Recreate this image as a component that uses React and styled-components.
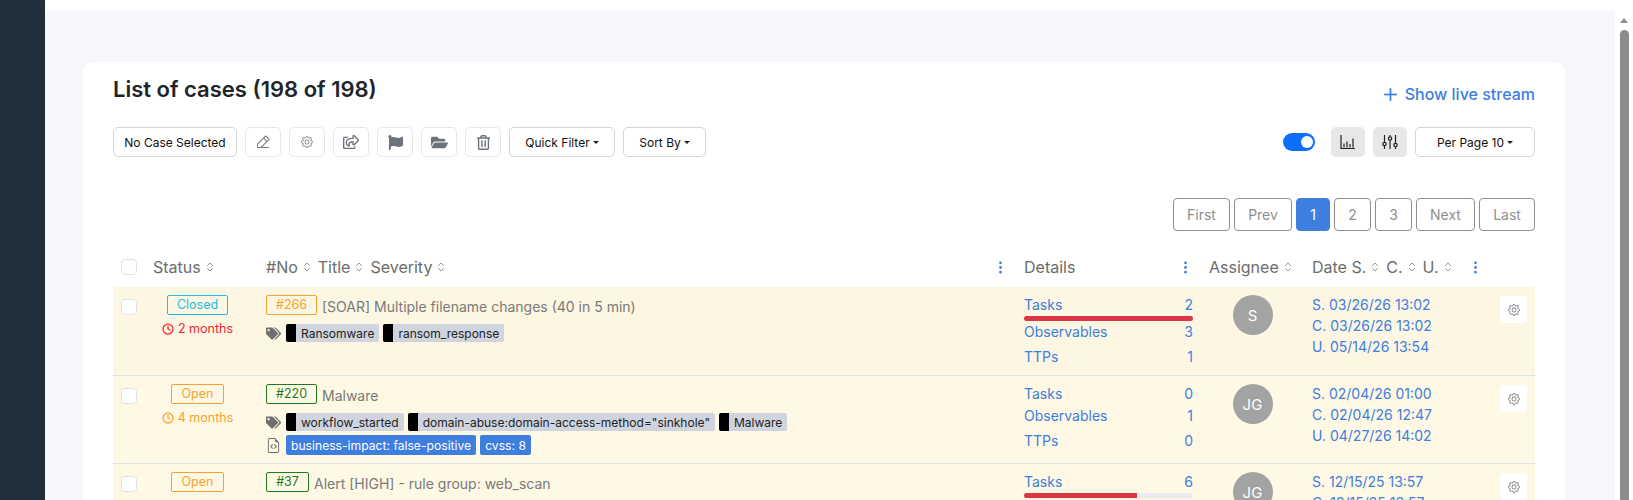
import React from "react";
import styled, {createGlobalStyle} from "styled-components";
import {FaFlag, FaFolderOpen, FaRegShareSquare, FaRegTrashAlt, FaTags} from "react-icons/fa";
import {BsGear, BsPlusLg, BsThreeDotsVertical, BsFileEarmarkCode} from "react-icons/bs";
import {PiPencilSimpleLine} from "react-icons/pi";
import {LuChevronsUpDown, LuClock} from "react-icons/lu";

const blue = "#3d7ede";

const GlobalStyle = createGlobalStyle`
    html, body {
        margin: 0;
        height: 500px;
        overflow: hidden;
    }
    body {
        font-family: Inter, "Liberation Sans", sans-serif;
        font-size: 14px;
        background: #fff;
    }
    * {
        box-sizing: border-box;
    }
`;

const Page = styled.div`
    display: flex;
    width: 1633px;
    height: 500px;
    overflow: hidden;
`;
const Sidebar = styled.aside`
    width: 45px;
    flex-shrink: 0;
    background: #212f3d;
`;
const Main = styled.main`
    flex: 1;
    min-width: 0;
    background: #f5f7fb;
    border-top: 11px solid #fff;
    padding: 51px 50px 0 38px;
`;
const ScrollTrack = styled.div`
    width: 18px;
    flex-shrink: 0;
    background: #fff;
    display: flex;
    flex-direction: column;
    align-items: center;
    padding-top: 18px;
`;
const ScrollArrow = styled.div`
    width: 0;
    height: 0;
    border-left: 4px solid transparent;
    border-right: 4px solid transparent;
    border-bottom: 5px solid #8c8c8c;
    margin-bottom: 7px;
`;
const ScrollThumb = styled.div`
    width: 9px;
    flex: 1;
    background: #8c8c8c;
    border-radius: 5px 5px 0 0;
`;
const Card = styled.section`
    background: #fff;
    border-radius: 10px 10px 0 0;
    padding: 0 30px;
    height: 500px;
`;
const CardHead = styled.div`
    display: flex;
    justify-content: space-between;
    height: 65px;
`;
const Title = styled.h1`
    margin: 0;
    padding-top: 12px;
    font-size: 22px;
    line-height: 30px;
    font-weight: 600;
    color: #212529;
`;
const LiveLink = styled.a`
    display: flex;
    align-items: center;
    gap: 6px;
    height: 30px;
    margin-top: 17px;
    font-size: 16px;
    font-weight: 500;
    color: ${blue};
    svg {
        font-size: 17px;
        stroke: currentColor;
        stroke-width: 0.6;
    }
`;
const Toolbar = styled.div`
    display: flex;
    align-items: center;
    gap: 8px;
    height: 30px;
`;
const Spacer = styled.div`
    flex: 1;
`;
const Button = styled.button`
    height: 30px;
    width: ${(p) => p.$w}px;
    padding: 0;
    display: inline-flex;
    align-items: center;
    justify-content: center;
    gap: 3px;
    background: ${(p) => (p.$filled ? "#e7e7e7" : "#fff")};
    border: 1px solid ${(p) => (p.$filled ? "#e7e7e7" : p.$faint ? "#e6e6e6" : "#d4d4d4")};
    border-radius: 5px;
    font-family: inherit;
    font-size: 12px;
    font-weight: 400;
    color: #111;
    svg {
        color: ${(p) => (p.$light ? "#777" : "#6c727a")};
        font-size: ${(p) => p.$icon || 16}px;
    }
`;
const Caret = styled.span`
    width: 0;
    height: 0;
    border-left: 3px solid transparent;
    border-right: 3px solid transparent;
    border-top: 3px solid #222;
`;
const Toggle = styled.div`
    width: 32px;
    height: 18px;
    margin-right: 8px;
    border-radius: 9px;
    background: #0d6efd;
    display: flex;
    align-items: center;
    justify-content: flex-end;
    padding-right: 2px;
    &::after {
        content: "";
        width: 12px;
        height: 12px;
        border-radius: 50%;
        background: #fff;
    }
`;
const Pager = styled.div`
    display: flex;
    justify-content: flex-end;
    gap: 4px;
    margin-top: 41px;
`;
const PageBtn = styled.div`
    height: 33px;
    width: ${(p) => p.$w}px;
    display: flex;
    align-items: center;
    justify-content: center;
    font-size: 14px;
    border-radius: 4px;
    color: ${(p) => (p.$active ? "#fff" : "#8f8f8f")};
    background: ${(p) => (p.$active ? blue : "#fff")};
    border: 1px solid ${(p) => (p.$active ? blue : "#8f8f8f")};
`;
const columns = "30px 109px 1fr 189px 99px 188px 45px";
const HeadRow = styled.div`
    display: grid;
    grid-template-columns: ${columns};
    height: 56px;
    align-items: center;
    padding-top: 16px;
    font-size: 16px;
    font-weight: 400;
    color: #6c6c6c;
`;
const HeadCell = styled.div`
    display: flex;
    align-items: center;
    padding-left: ${(p) => p.$pad || 0}px;
`;
const Sort = styled(LuChevronsUpDown)`
    font-size: 12px;
    margin: 0 5px 0 3px;
    color: #777;
    stroke-width: 1.6;
`;
const Kebab = styled(BsThreeDotsVertical)`
    font-size: 15px;
    color: ${blue};
    margin-left: auto;
    margin-right: ${(p) => p.$right || 0}px;
`;
const Check = styled.span`
    display: block;
    width: 16px;
    height: 16px;
    margin-left: 8px;
    margin-top: ${(p) => p.$top || 0}px;
    background: #fff;
    border: 1px solid #dee2e6;
    border-radius: 4px;
`;
const Row = styled.div`
    display: grid;
    grid-template-columns: ${columns};
    padding: 8px 0;
    background: ${(p) => p.$bg};
    border-bottom: 1px solid #dee2e6;
    font-size: 14px;
`;
const StatusCell = styled.div`
    display: flex;
    flex-direction: column;
    align-items: center;
`;
const StatusBadge = styled.span`
    height: 20px;
    width: ${(p) => p.$w}px;
    display: flex;
    align-items: center;
    justify-content: center;
    padding-bottom: 1px;
    font-size: 12.5px;
    color: ${(p) => p.$color};
    border: 1px solid ${(p) => p.$color};
    border-radius: 2px;
`;
const Age = styled.div`
    display: flex;
    align-items: center;
    gap: 4px;
    margin-top: 3px;
    line-height: 21px;
    font-size: 12.5px;
    color: ${(p) => p.$color};
    svg {
        stroke-width: 2.5;
    }
`;
const MainCell = styled.div`
    padding-left: 14px;
`;
const TitleLine = styled.div`
    display: flex;
    align-items: center;
    gap: 5px;
    height: 20px;
    color: #7a7a7a;
`;
const TitleText = styled.span`
    padding-top: 2px;
`;
const CaseNo = styled(StatusBadge)`
    flex-shrink: 0;
`;
const TagLine = styled.div`
    display: flex;
    align-items: center;
    gap: 4px;
    margin-top: ${(p) => p.$top}px;
    svg {
        flex-shrink: 0;
        width: 15px;
        margin-right: 1px;
        font-size: 15px;
        color: #6f6f6f;
    }
`;
const Tag = styled.span`
    display: flex;
    align-items: center;
    height: 18px;
    padding-right: 5px;
    font-size: 12px;
    color: #222;
    background: #d0d4de;
    border-radius: 2px;
    &::before {
        content: "";
        width: 10px;
        height: 18px;
        margin-right: 5px;
        background: #000;
        border-radius: 2px 0 0 2px;
    }
`;
const Chip = styled.span`
    display: flex;
    align-items: center;
    height: 20px;
    padding: 0 5px;
    font-size: 12.15px;
    color: #fff;
    background: ${blue};
    border-radius: 2px;
`;
const DetailCell = styled.div`
    padding: 0 10px;
`;
const DetailLine = styled.div`
    display: flex;
    justify-content: space-between;
    line-height: ${(p) => (p.$first ? 19 : 21)}px;
    padding-bottom: ${(p) => (p.$first ? 2 : 0)}px;
    margin-top: ${(p) => p.$top || 0}px;
    color: ${blue};
`;
const Bar = styled.div`
    height: 5px;
    background: #e9ecef;
    border-radius: 3px;
    overflow: hidden;
    div {
        height: 100%;
        background: #dc3545;
    }
`;
const AssigneeCell = styled.div`
    display: flex;
    justify-content: center;
`;
const Avatar = styled.div`
    width: 40px;
    height: 40px;
    border-radius: 50%;
    background: #a3a3a3;
    color: #fff;
    font-size: 15px;
    display: flex;
    align-items: center;
    justify-content: center;
`;
const DateCell = styled.div`
    padding-left: 10px;
    margin-top: -1px;
    line-height: 21px;
    color: ${blue};
`;
const ActionCell = styled.div`
    padding-left: 10px;
`;
const GearBtn = styled.div`
    width: 27px;
    height: 27px;
    margin-top: 1px;
    background: #fff;
    border-radius: 4px;
    display: flex;
    align-items: center;
    justify-content: center;
    svg {
        font-size: 12px;
        color: #6c727a;
    }
`;

function BarsIcon() {
    return (
        <svg width="18" height="18" viewBox="0 0 18 18" fill="none" stroke="#222" strokeWidth="1.2">
            <path d="M2 2v13.5h14" />
            <path d="M5 14.5v-4M8 14.5v-6M11 14.5v-3.5M14 14.5v-9" />
        </svg>
    );
}

function SlidersIcon() {
    return (
        <svg width="18" height="18" viewBox="0 0 18 18" fill="none" stroke="#222" strokeWidth="1.2">
            <path d="M3.5 2v7M3.5 13v3M9 2v1.5M9 7.5V16M14.5 2v8M14.5 14v2" />
            <circle cx="3.5" cy="11" r="1.7" />
            <circle cx="9" cy="5.5" r="1.7" />
            <circle cx="14.5" cy="12" r="1.7" />
        </svg>
    );
}

const rows = [
    {
        bg: "#fcf6e3",
        status: "Closed", statusColor: "#17c1e8", statusW: 61,
        age: "2 months", ageColor: "#f5262b",
        no: "#266", noColor: "#f7a22f", noW: 51,
        title: "[SOAR] Multiple filename changes (40 in 5 min)",
        tags: ["Ransomware", "ransom_response"],
        tasks: 2, taskBar: 100, observables: 3, ttps: 1,
        initials: "S",
        dates: ["S. 03/26/26 13:02", "C. 03/26/26 13:02", "U. 05/14/26 13:54"],
    },
    {
        bg: "#fef8e5",
        status: "Open", statusColor: "#f7a22f", statusW: 53,
        age: "4 months", ageColor: "#f7a22f",
        no: "#220", noColor: "#1d7d1d", noW: 51,
        title: "Malware",
        tags: ["workflow_started", 'domain-abuse:domain-access-method="sinkhole"', "Malware"],
        chips: ["business-impact: false-positive", "cvss: 8"],
        tasks: 0, observables: 1, ttps: 0,
        initials: "JG",
        dates: ["S. 02/04/26 01:00", "C. 02/04/26 12:47", "U. 04/27/26 14:02"],
    },
    {
        bg: "#fef8e5",
        status: "Open", statusColor: "#f7a22f", statusW: 53,
        age: "4 months", ageColor: "#f7a22f",
        no: "#37", noColor: "#1d7d1d", noW: 43,
        title: "Alert [HIGH] - rule group: web_scan",
        tags: [],
        tasks: 6, taskBar: 67, observables: 2, ttps: 0,
        initials: "JG",
        dates: ["S. 12/15/25 13:57", "C. 12/15/25 13:57", "U. 04/27/26 14:02"],
    },
];

function CaseRow({item}) {
    return (
        <Row $bg={item.bg}>
            <div>
                <Check $top={4} />
            </div>
            <StatusCell>
                <StatusBadge $w={item.statusW} $color={item.statusColor}>{item.status}</StatusBadge>
                <Age $color={item.ageColor}>
                    <LuClock size={12} />
                    {item.age}
                </Age>
            </StatusCell>
            <MainCell>
                <TitleLine>
                    <CaseNo $w={item.noW} $color={item.noColor}>{item.no}</CaseNo>
                    <TitleText>{item.title}</TitleText>
                </TitleLine>
                <TagLine $top={9}>
                    <FaTags />
                    {item.tags.map((t) => (
                        <Tag key={t}>{t}</Tag>
                    ))}
                </TagLine>
                {item.chips && (
                    <TagLine $top={4}>
                        <BsFileEarmarkCode />
                        {item.chips.map((c) => (
                            <Chip key={c}>{c}</Chip>
                        ))}
                    </TagLine>
                )}
            </MainCell>
            <DetailCell>
                <DetailLine $first><span>Tasks</span><span>{item.tasks}</span></DetailLine>
                {item.taskBar && (
                    <Bar>
                        <div style={{width: `${item.taskBar}%`}} />
                    </Bar>
                )}
                <DetailLine><span>Observables</span><span>{item.observables}</span></DetailLine>
                <DetailLine $top={4}><span>TTPs</span><span>{item.ttps}</span></DetailLine>
            </DetailCell>
            <AssigneeCell>
                <Avatar>{item.initials}</Avatar>
            </AssigneeCell>
            <DateCell>
                {item.dates.map((d) => (
                    <div key={d}>{d}</div>
                ))}
            </DateCell>
            <ActionCell>
                <GearBtn>
                    <BsGear />
                </GearBtn>
            </ActionCell>
        </Row>
    );
}

export default function App() {
    return (
        <>
            <GlobalStyle />
            <Page>
                <Sidebar />
                <Main>
                    <Card>
                        <CardHead>
                            <Title>List of cases (198 of 198)</Title>
                            <LiveLink>
                                <BsPlusLg />
                                Show live stream
                            </LiveLink>
                        </CardHead>
                        <Toolbar>
                            <Button $w={124}>No Case Selected</Button>
                            <Button $w={36} $faint $light><PiPencilSimpleLine /></Button>
                            <Button $w={36} $faint $light $icon={12}><BsGear /></Button>
                            <Button $w={36} $faint><FaRegShareSquare /></Button>
                            <Button $w={36} $faint $icon={15}><FaFlag /></Button>
                            <Button $w={36} $faint $icon={17}><FaFolderOpen /></Button>
                            <Button $w={36} $faint $icon={15}><FaRegTrashAlt /></Button>
                            <Button $w={106}>Quick Filter<Caret /></Button>
                            <Button $w={83}>Sort By<Caret /></Button>
                            <Spacer />
                            <Toggle />
                            <Button $w={34} $filled><BarsIcon /></Button>
                            <Button $w={34} $filled><SlidersIcon /></Button>
                            <Button $w={120}>Per Page 10<Caret /></Button>
                        </Toolbar>
                        <Pager>
                            <PageBtn $w={57}>First</PageBtn>
                            <PageBtn $w={58}>Prev</PageBtn>
                            <PageBtn $w={34} $active>1</PageBtn>
                            <PageBtn $w={37}>2</PageBtn>
                            <PageBtn $w={37}>3</PageBtn>
                            <PageBtn $w={59}>Next</PageBtn>
                            <PageBtn $w={56}>Last</PageBtn>
                        </Pager>
                        <HeadRow>
                            <div><Check /></div>
                            <HeadCell $pad={10}>Status<Sort /></HeadCell>
                            <HeadCell $pad={14}>
                                #No<Sort />Title<Sort />Severity<Sort />
                                <Kebab $right={6} />
                            </HeadCell>
                            <HeadCell $pad={10}>Details<Kebab $right={10} /></HeadCell>
                            <HeadCell $pad={6}>Assignee<Sort /></HeadCell>
                            <HeadCell $pad={10}>
                                Date S.<Sort />C.<Sort />U.<Sort />
                                <Kebab $right={7} />
                            </HeadCell>
                            <div />
                        </HeadRow>
                        {rows.map((item) => (
                            <CaseRow key={item.no} item={item} />
                        ))}
                    </Card>
                </Main>
                <ScrollTrack>
                    <ScrollArrow />
                    <ScrollThumb />
                </ScrollTrack>
            </Page>
        </>
    );
}
